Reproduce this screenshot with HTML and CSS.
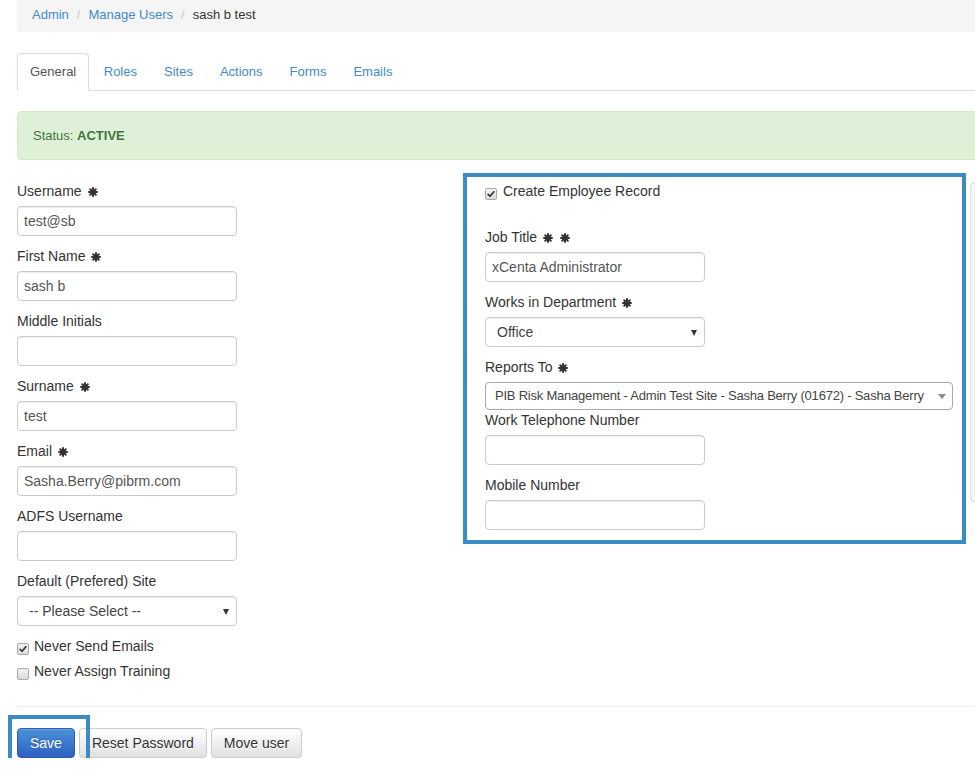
FILE: index.html
```html
<!DOCTYPE html>
<html lang="en">
<head>
<meta charset="utf-8">
<title>sash b test - Manage Users</title>
<link rel="stylesheet" href="styles.css">
</head>
<body>
<div class="page">
  <nav class="breadcrumb">
    <a href="#">Admin</a><span class="sep">/</span><a href="#">Manage Users</a><span class="sep">/</span><span class="current">sash b test</span>
  </nav>

  <ul class="tabs">
    <li><a class="active" href="#">General</a></li>
    <li><a href="#">Roles</a></li>
    <li><a href="#">Sites</a></li>
    <li><a href="#">Actions</a></li>
    <li><a href="#">Forms</a></li>
    <li><a href="#">Emails</a></li>
  </ul>

  <div class="alert">Status: <strong>ACTIVE</strong></div>

  <div class="row">
    <div class="col-left">
      <div class="group">
        <label>Username<svg class="req" viewBox="0 0 10 10"><use href="#ast"/></svg></label>
        <div class="input">test@sb</div>
      </div>
      <div class="group">
        <label>First Name<svg class="req" viewBox="0 0 10 10"><use href="#ast"/></svg></label>
        <div class="input">sash b</div>
      </div>
      <div class="group">
        <label>Middle Initials</label>
        <div class="input"></div>
      </div>
      <div class="group">
        <label>Surname<svg class="req" viewBox="0 0 10 10"><use href="#ast"/></svg></label>
        <div class="input">test</div>
      </div>
      <div class="group">
        <label>Email<svg class="req" viewBox="0 0 10 10"><use href="#ast"/></svg></label>
        <div class="input">Sasha.Berry@pibrm.com</div>
      </div>
      <div class="group">
        <label>ADFS Username</label>
        <div class="input"></div>
      </div>
      <div class="group">
        <label>Default (Prefered) Site</label>
        <div class="input select"><span>-- Please Select --</span><i class="caret"></i></div>
      </div>
      <div class="check"><span class="cb"><svg viewBox="0 0 12 12"><use href="#tick"/></svg></span>Never Send Emails</div>
      <div class="check"><span class="cb"></span>Never Assign Training</div>
    </div>

    <div class="col-right">
      <div class="check first"><span class="cb"><svg viewBox="0 0 12 12"><use href="#tick"/></svg></span>Create Employee Record</div>
      <div class="group">
        <label>Job Title<svg class="req" viewBox="0 0 10 10"><use href="#ast"/></svg><svg class="req req2" viewBox="0 0 10 10"><use href="#ast"/></svg></label>
        <div class="input">xCenta Administrator</div>
      </div>
      <div class="group">
        <label>Works in Department<svg class="req" viewBox="0 0 10 10"><use href="#ast"/></svg></label>
        <div class="input select wide-pad"><span>Office</span><i class="caret"></i></div>
      </div>
      <div class="group tight">
        <label>Reports To<svg class="req" viewBox="0 0 10 10"><use href="#ast"/></svg></label>
        <div class="select2"><span>PIB Risk Management - Admin Test Site - Sasha Berry (01672) - Sasha Berry</span><i class="s2arrow"></i></div>
      </div>
      <div class="group">
        <label>Work Telephone Number</label>
        <div class="input"></div>
      </div>
      <div class="group">
        <label>Mobile Number</label>
        <div class="input"></div>
      </div>
    </div>

    <div class="well"></div>
  </div>

  <hr class="divider">

  <div class="actions">
    <button class="btn primary">Save</button>
    <button class="btn">Reset Password</button>
    <button class="btn">Move user</button>
    <div class="annot"></div>
  </div>
</div>

<svg class="defs" width="0" height="0" aria-hidden="true">
  <defs>
    <g id="ast" stroke="#333" stroke-width="2" stroke-linecap="round" fill="#333">
      <path d="M5 1V9M1 5H9M2.2 2.2L7.8 7.8M7.8 2.2L2.2 7.8"/>
      <circle cx="5" cy="5" r="2.4" stroke="none"/>
    </g>
    <path id="tick" d="M2.6 6.4L4.9 8.7L9.4 3.2" fill="none" stroke="#333" stroke-width="2" stroke-linecap="round" stroke-linejoin="round"/>
  </defs>
</svg>
</body>
</html>
```

FILE: styles.css
```css
html, body {
  margin: 0;
  padding: 0;
  overflow: hidden;
  background: #fff;
}

body {
  font-family: "Liberation Sans", Arial, Helvetica, sans-serif;
  font-size: 14px;
  color: #333;
}

.defs {
  position: absolute;
  width: 0;
  height: 0;
}

.page {
  padding-left: 17px;
  width: 1100px;
}

a {
  color: #428bca;
  text-decoration: none;
}

/* breadcrumb */
.breadcrumb {
  display: flex;
  align-items: center;
  background: #f5f5f5;
  border-radius: 0 0 4px 4px;
  padding: 5px 15px 7px;
  line-height: 20px;
  font-size: 13px;
}

.breadcrumb .sep {
  color: #ccc;
  padding: 0 8px;
}

.breadcrumb .current {
  color: #333;
}

/* tabs */
.tabs {
  list-style: none;
  margin: 21px 0 0;
  padding: 0;
  display: flex;
  border-bottom: 1px solid #ddd;
}

.tabs li {
  margin-bottom: -1px;
  margin-right: 2px;
}

.tabs a {
  display: block;
  padding: 8px 12px 8px;
  line-height: 20px;
  font-size: 13px;
  border: 1px solid transparent;
  border-radius: 4px 4px 0 0;
}

.tabs li + li a {
  padding: 8px 11.5px;
}

.tabs a.active {
  color: #555;
  background: #fff;
  border-color: #ddd #ddd transparent;
}

/* alert */
.alert {
  margin-top: 20px;
  padding: 15px;
  line-height: 17px;
  font-size: 13px;
  color: #3c763d;
  background: #dff0d8;
  border: 1px solid #d6e9c6;
  border-radius: 4px;
}

/* form row */
.row {
  display: flex;
  align-items: flex-start;
  margin-top: 21px;
}

.col-left {
  width: 446px;
  flex: none;
}

.col-right {
  box-sizing: border-box;
  width: 503px;
  flex: none;
  margin-top: -8px;
  border: 4px solid #3b8cc5;
  padding: 4px 0 0 18px;
}

.well {
  flex: none;
  width: 200px;
  height: 318px;
  margin-left: 4px;
  margin-top: 1px;
  background: #f5f5f5;
  border: 1px solid #e3e3e3;
  border-radius: 4px;
  box-shadow: inset 0 1px 1px rgba(0, 0, 0, 0.05);
}

.group {
  margin-bottom: 10px;
}

.group.tight {
  margin-bottom: 0;
}

label {
  display: block;
  line-height: 20px;
  margin-bottom: 5px;
}

.req {
  width: 10px;
  height: 10px;
  margin-left: 6px;
  vertical-align: -1px;
}

.req.req2 {
  margin-left: 7px;
}

.input {
  box-sizing: border-box;
  width: 220px;
  height: 30px;
  padding: 0 6px;
  line-height: 28px;
  color: #555;
  background: #fff;
  border: 1px solid #ccc;
  border-radius: 4px;
  box-shadow: inset 0 1px 1px rgba(0, 0, 0, 0.075);
  white-space: nowrap;
  overflow: hidden;
}

.input.select {
  display: flex;
  align-items: center;
  justify-content: space-between;
  padding: 0 7px 0 11px;
  color: #444;
}

.input.select.wide-pad {
  padding-left: 11px;
}

.caret {
  width: 0;
  height: 0;
  border-top: 6px solid #333;
  border-left: 3.5px solid transparent;
  border-right: 3.5px solid transparent;
  margin-top: 1px;
}

.select2 {
  box-sizing: border-box;
  width: 468px;
  height: 28px;
  display: flex;
  align-items: center;
  justify-content: space-between;
  padding: 0 6px 0 9px;
  line-height: 26px;
  font-size: 13px;
  letter-spacing: -0.22px;
  color: #444;
  background: #fff;
  border: 1px solid #aaa;
  border-radius: 4px;
  white-space: nowrap;
}

.s2arrow {
  flex: none;
  width: 0;
  height: 0;
  margin-left: 4px;
  border-top: 5px solid #888;
  border-left: 4px solid transparent;
  border-right: 4px solid transparent;
}

/* checkboxes */
.check {
  line-height: 20px;
  margin-bottom: 5px;
  display: flex;
  align-items: center;
}

.check.first {
  margin-bottom: 26px;
}

.cb {
  box-sizing: border-box;
  width: 12px;
  height: 12px;
  margin-right: 5px;
  margin-top: 6px;
  flex: none;
  border: 1px solid #a8a8a8;
  border-radius: 2px;
  background: linear-gradient(#f2f2f2, #dcdcdc);
  display: flex;
}

.cb svg {
  width: 10px;
  height: 10px;
}

.col-right .cb {
  margin-right: 6px;
  margin-left: 0;
}

/* footer */
.divider {
  margin: 20px 0 0;
  border: 0;
  border-top: 1px solid #eee;
  height: 0;
}

.actions {
  position: relative;
  display: flex;
  gap: 4px;
  margin-top: 21px;
}

.btn {
  box-sizing: border-box;
  height: 30px;
  padding: 0 12px;
  font-family: "Liberation Sans", Arial, Helvetica, sans-serif;
  font-size: 14px;
  line-height: 28px;
  color: #333;
  text-shadow: 0 1px 0 #fff;
  background: linear-gradient(#fff, #e0e0e0);
  border: 1px solid #ccc;
  border-radius: 4px;
  box-shadow: inset 0 1px 0 rgba(255, 255, 255, 0.15), 0 1px 1px rgba(0, 0, 0, 0.075);
}

.btn.primary {
  color: #fff;
  text-shadow: 0 -1px 0 rgba(0, 0, 0, 0.2);
  background: linear-gradient(#4b92d8, #2f60c3);
  border-color: #2d5fa8;
}

.annot {
  position: absolute;
  left: -9px;
  top: -13px;
  width: 82px;
  height: 70px;
  box-sizing: border-box;
  border: 4px solid #3b8cc5;
  pointer-events: none;
}
```
